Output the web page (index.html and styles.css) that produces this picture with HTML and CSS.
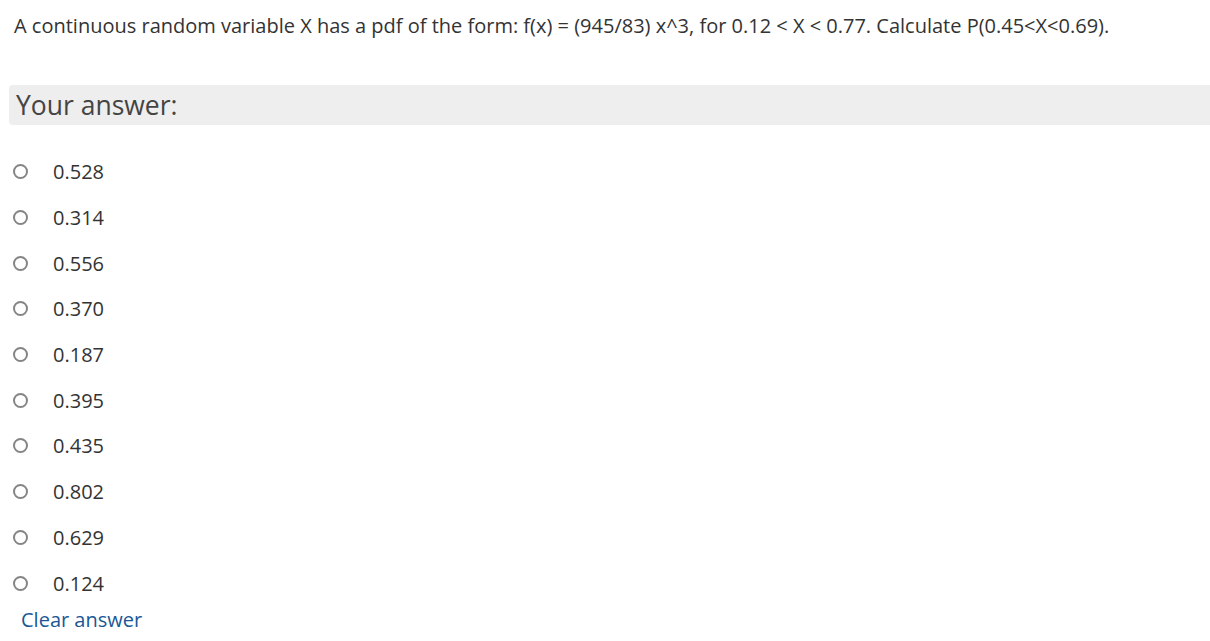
FILE: index.html
```html
<!DOCTYPE html>
<html lang="en">
<head>
  <meta charset="UTF-8" />
  <title>Question</title>
  <link rel="stylesheet" href="styles.css">
</head>
<body>
  <div class="que">
    <div class="qtext">A continuous random variable X has a pdf of the form: f(x) = (945/83) x^3, for 0.12 &lt; X &lt; 0.77. Calculate P(0.45&lt;X&lt;0.69).</div>

    <div class="prompt">Your answer:</div>

    <div class="answers">
      <label class="opt"><span class="radio"></span><span class="val">0.528</span></label>
      <label class="opt"><span class="radio"></span><span class="val">0.314</span></label>
      <label class="opt"><span class="radio"></span><span class="val">0.556</span></label>
      <label class="opt"><span class="radio"></span><span class="val">0.370</span></label>
      <label class="opt"><span class="radio"></span><span class="val">0.187</span></label>
      <label class="opt"><span class="radio"></span><span class="val">0.395</span></label>
      <label class="opt"><span class="radio"></span><span class="val">0.435</span></label>
      <label class="opt"><span class="radio"></span><span class="val">0.802</span></label>
      <label class="opt"><span class="radio"></span><span class="val">0.629</span></label>
      <label class="opt"><span class="radio"></span><span class="val">0.124</span></label>
    </div>

    <a class="clear" href="#">Clear answer</a>
  </div>
</body>
</html>
```

FILE: styles.css
```css
html, body {
  margin: 0;
  padding: 0;
  background: #fff;
  font-family: 'Open Sans', sans-serif;
  color: #333;
  overflow: hidden;
}

.que {
  padding: 12px 0 0 0;
}

.qtext {
  padding-left: 14px;
  font-size: 20px;
  line-height: 28px;
}

.prompt {
  margin: 45px 0 0 9px;
  height: 40px;
  line-height: 40px;
  padding-left: 7px;
  background: #eee;
  border-radius: 4px 0 0 4px;
  font-size: 26.5px;
  color: #444;
}

.answers {
  display: flex;
  flex-direction: column;
  padding: 24px 0 0 13px;
}

.opt {
  display: flex;
  align-items: center;
  height: 45.7px;
  font-size: 20px;
}

.radio {
  width: 11px;
  height: 11px;
  border: 2px solid #858585;
  border-radius: 50%;
  margin-right: 25px;
}

.clear {
  display: inline-block;
  margin-left: 21px;
  font-size: 20px;
  color: #1a5796;
  text-decoration: none;
}
```
